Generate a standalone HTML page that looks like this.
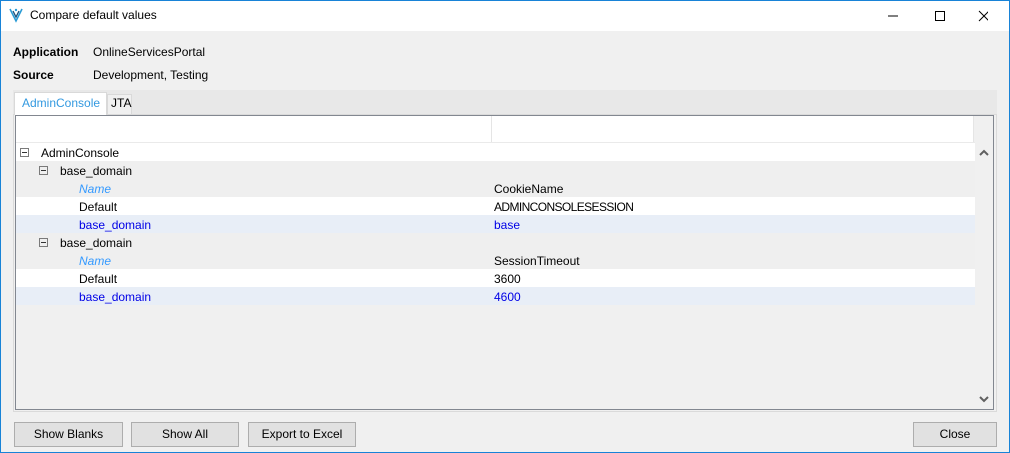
<!DOCTYPE html>
<html><head><style>
*{margin:0;padding:0;box-sizing:border-box}
body{width:1010px;height:453px;overflow:hidden;background:#f0f0f0;font-family:"Segoe UI","Liberation Sans",sans-serif;font-size:12px;color:#000;position:relative}
.win{position:absolute;left:0;top:0;width:1010px;height:453px;border:1px solid #1883d7}
.abs{position:absolute}
.title{left:1px;top:1px;width:1008px;height:30px;background:#fff}
.btn{position:absolute;top:422px;height:25px;background:#e1e1e1;border:1px solid #adadad;text-align:center;line-height:23px;font-size:12px}
.row{position:absolute;left:16px;width:959px;height:18px;line-height:20px}
.t{position:absolute}
.v{position:absolute;left:478px}
.box{position:absolute;width:9px;height:9px;border:1px solid #7a7a7a;top:5px}
.box:after{content:"";position:absolute;left:1px;top:3px;width:5px;height:1px;background:#333}
</style></head><body>
<div class="win"></div>
<div class="abs title"></div>
<svg class="abs" style="left:9px;top:7px" width="14" height="16" viewBox="0 0 14 16"><path d="M1 2 L7 14 L13 2" fill="none" stroke="#2a9bd5" stroke-width="1.6"/><path d="M4 4 L7 10 L10 4" fill="none" stroke="#1a4f7a" stroke-width="1.3"/><circle cx="7" cy="3" r="1.2" fill="#2a9bd5"/></svg>
<div class="abs" style="left:30px;top:8px;font-size:12px">Compare default values</div>
<svg class="abs" style="left:888px;top:10px" width="100" height="12"><line x1="0" y1="6" x2="10" y2="6" stroke="#000"/><rect x="47.5" y="1.5" width="9" height="9" fill="none" stroke="#000"/><path d="M91 1 L101 11 M101 1 L91 11" stroke="#000"/></svg>
<div class="abs" style="left:13px;top:45px;font-weight:bold">Application</div>
<div class="abs" style="left:93px;top:45px">OnlineServicesPortal</div>
<div class="abs" style="left:13px;top:68px;font-weight:bold">Source</div>
<div class="abs" style="left:93px;top:68px">Development, Testing</div>
<div class="abs" style="left:13px;top:90px;width:984px;height:24px;background:#e8e8e8"></div>
<div class="abs" style="left:13px;top:114px;width:984px;height:298px;border:1px solid #dadada;background:#f0f0f0"></div>
<div class="abs" style="left:14px;top:92px;width:93px;height:23px;background:#fff;border:1px solid #d9d9d9;border-bottom:none;color:#3399e0;padding:3px 0 0 7px">AdminConsole</div>
<div class="abs" style="left:107px;top:94px;width:25px;height:20px;background:#f0f0f0;border:1px solid #d9d9d9;border-bottom:none;padding:1px 0 0 3px">JTA</div>
<div class="abs" style="left:15px;top:115px;width:979px;height:295px;border:1px solid #828790;background:#f0f0f0"></div>
<div class="abs" style="left:16px;top:116px;width:958px;height:26px;background:#fff"></div>
<div class="abs" style="left:491px;top:116px;width:1px;height:26px;background:#e5e5e5"></div>
<div class="abs" style="left:973px;top:116px;width:1px;height:26px;background:#e5e5e5"></div>
<div class="abs" style="left:16px;top:142px;width:959px;height:1px;background:#eaeaea"></div>
<div class="abs" style="left:976px;top:143px;width:17px;height:266px;background:#f0f0f0"></div>
<svg class="abs" style="left:979px;top:149px" width="10" height="8"><path d="M1 6 L5 2 L9 6" fill="none" stroke="#606060" stroke-width="2"/></svg>
<svg class="abs" style="left:979px;top:395px" width="10" height="8"><path d="M1 2 L5 6 L9 2" fill="none" stroke="#606060" stroke-width="2"/></svg>

<div class="row" style="top:143px;background:#fff"><div class="box" style="left:4px"></div><div class="t" style="left:25px">AdminConsole</div></div>
<div class="row" style="top:161px;background:#efefef"><div class="box" style="left:23px"></div><div class="t" style="left:44px">base_domain</div></div>
<div class="row" style="top:179px;background:#efefef"><div class="t" style="left:63px;color:#3399ff;font-style:italic">Name</div><div class="v">CookieName</div></div>
<div class="row" style="top:197px;background:#fff"><div class="t" style="left:63px">Default</div><div class="v" style="letter-spacing:-0.6px">ADMINCONSOLESESSION</div></div>
<div class="row" style="top:215px;background:#e8eef7;color:#0000e6"><div class="t" style="left:63px">base_domain</div><div class="v">base</div></div>
<div class="row" style="top:233px;background:#efefef"><div class="box" style="left:23px"></div><div class="t" style="left:44px">base_domain</div></div>
<div class="row" style="top:251px;background:#efefef"><div class="t" style="left:63px;color:#3399ff;font-style:italic">Name</div><div class="v">SessionTimeout</div></div>
<div class="row" style="top:269px;background:#fff"><div class="t" style="left:63px">Default</div><div class="v">3600</div></div>
<div class="row" style="top:287px;background:#e8eef7;color:#0000e6"><div class="t" style="left:63px">base_domain</div><div class="v">4600</div></div>

<div class="btn" style="left:14px;width:109px">Show Blanks</div>
<div class="btn" style="left:131px;width:108px">Show All</div>
<div class="btn" style="left:248px;width:108px">Export to Excel</div>
<div class="btn" style="left:913px;width:84px">Close</div>
</body></html>
